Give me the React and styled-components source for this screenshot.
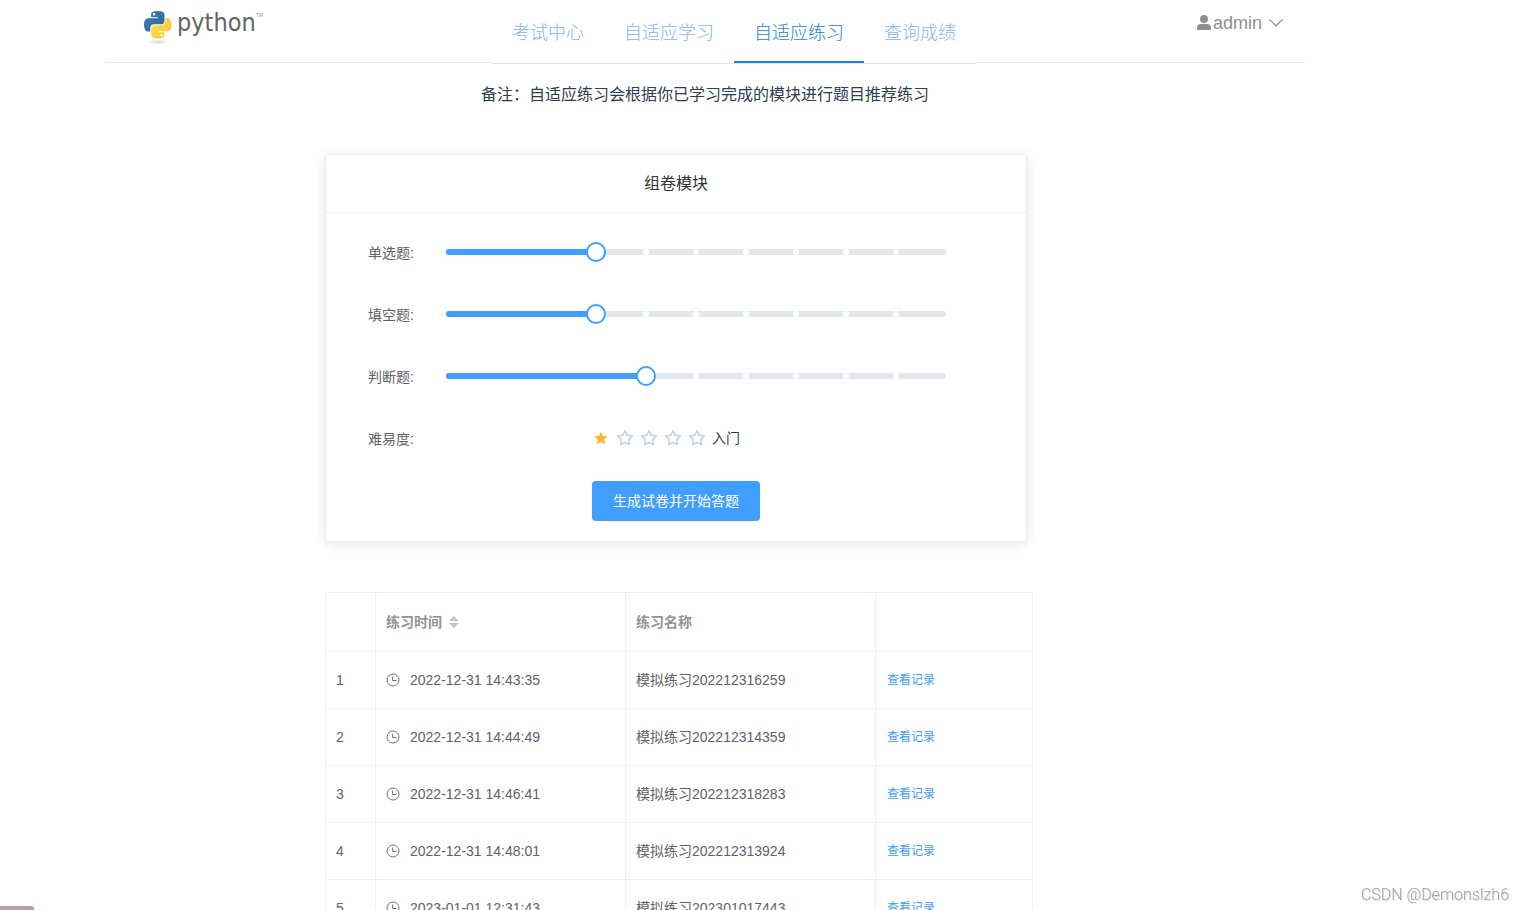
import { useState } from 'react';
import styled, { createGlobalStyle } from 'styled-components';

const blue = '#409eff';
const line = '#ebeef5';

const GlobalStyle = createGlobalStyle`
  * {
    box-sizing: border-box;
  }
  body {
    margin: 0;
    background: #fff;
    color: #2c3e50;
    font-family: "Liberation Sans", "Noto Sans CJK SC", sans-serif;
    font-size: 14px;
    line-height: 22px;
  }
  button, input {
    font: inherit;
  }
`;

const Page = styled.div`
  height: 100vh;
  overflow-y: auto;
  scrollbar-width: none;
`;

const Container = styled.div`
  max-width: 1200px;
  margin-left: 105px;
`;

const Header = styled.header`
  display: flex;
  align-items: flex-start;
  height: 63px;
  border-bottom: 1px solid #e6e6e6;
`;

const Logo = styled.a`
  display: flex;
  align-items: flex-start;
  flex: 0 0 387px;
  padding: 6px 0 0 38px;
  color: #646464;
  text-decoration: none;

  svg {
    margin-top: 4px;
  }
`;

const LogoName = styled.span`
  margin-left: 4px;
  font-family: "DejaVu Sans Condensed", "DejaVu Sans", sans-serif;
  font-size: 25px;
  line-height: 34px;
`;

const LogoMark = styled.span`
  margin-top: 6px;
  font-size: 5px;
  line-height: 6px;
  color: #999;
`;

const Nav = styled.nav`
  display: flex;
  height: 64px;
  background: #fff;
  border-bottom: 1px solid #e6e6e6;
`;

const NavItem = styled.a`
  height: 63px;
  padding: 0 20px;
  border-bottom: 2px solid ${(p) => (p.$active ? '#1682e6' : 'transparent')};
  color: ${(p) => (p.$active ? '#1682e6' : '#7fb5ec')};
  font-size: 18px;
  font-weight: 300;
  line-height: 66px;
  text-decoration: none;
`;

const UserMenu = styled.button`
  display: flex;
  align-items: center;
  margin-left: auto;
  padding: 12px 21px 0 0;
  border: 0;
  background: none;
  color: #909090;
  font-size: 18px;
  line-height: 22px;
  cursor: pointer;

  svg:first-child {
    margin-right: 2px;
  }
  svg:last-child {
    margin-left: 6px;
  }
`;

const Note = styled.p`
  margin: 0;
  padding-top: 20px;
  font-size: 16px;
  line-height: 24px;
  text-align: center;
`;

const Main = styled.main`
  max-width: 708px;
  margin: 47px 0 0 220px;
`;

const Card = styled.section`
  margin: 0 6px 50px 0;
  border: 1px solid ${line};
  border-radius: 4px;
  background: #fff;
  box-shadow: 0 2px 12px rgba(0, 0, 0, 0.1);
`;

const CardTitle = styled.h2`
  margin: 0;
  padding: 18px 20px;
  border-bottom: 1px solid ${line};
  color: #303133;
  font-size: 16px;
  font-weight: 400;
  line-height: 21px;
  text-align: center;
`;

const Form = styled.form`
  padding: 20px;
`;

const FormRow = styled.div`
  display: flex;
  height: 40px;
  margin-bottom: 22px;
`;

const RowLabel = styled.label`
  flex: 0 0 100px;
  padding-right: 32px;
  color: #606266;
  line-height: 40px;
  text-align: right;
  white-space: nowrap;
`;

const SliderBox = styled.div`
  position: relative;
  flex: 0 1 500px;
  height: 6px;
  margin-top: 16px;
  border-radius: 3px;
  background: #e4e7ed;
`;

const SliderBar = styled.div`
  height: 6px;
  border-radius: 3px 0 0 3px;
  background: ${blue};
`;

const SliderStop = styled.span`
  position: absolute;
  top: 0;
  width: 6px;
  height: 6px;
  border-radius: 50%;
  background: #fff;
  transform: translateX(-50%);
`;

const SliderInput = styled.input`
  position: absolute;
  top: -7px;
  left: -10px;
  width: calc(100% + 20px);
  height: 20px;
  margin: 0;
  background: transparent;
  appearance: none;
  cursor: pointer;

  &::-webkit-slider-thumb {
    width: 20px;
    height: 20px;
    border: 2px solid ${blue};
    border-radius: 50%;
    background: #fff;
    appearance: none;
  }
`;

const Rate = styled.div`
  display: flex;
  align-items: center;
  height: 38px;
  margin-left: 146px;
`;

const RateStar = styled.label`
  position: relative;
  display: flex;
  justify-content: center;
  width: 18px;
  margin-right: 6px;
  cursor: pointer;

  input {
    position: absolute;
    inset: 0;
    margin: 0;
    opacity: 0;
  }
`;

const SubmitButton = styled.button`
  display: block;
  height: 40px;
  margin: 0 auto;
  padding: 0 21px;
  border: 0;
  border-radius: 4px;
  background: ${blue};
  color: #fff;
  cursor: pointer;
`;

const Table = styled.table`
  width: 100%;
  table-layout: fixed;
  border-spacing: 0;
  border-top: 1px solid ${line};
  border-left: 1px solid ${line};
  color: #606266;
`;

const Th = styled.th`
  width: ${(p) => p.$width || 'auto'};
  height: 59px;
  padding: 0 10px;
  border-right: 1px solid ${line};
  border-bottom: 1px solid ${line};
  color: #909399;
  text-align: left;
`;

const Td = styled.td`
  height: 57px;
  padding: 0 10px;
  border-right: 1px solid ${line};
  border-bottom: 1px solid ${line};
`;

const SortButton = styled.button`
  display: flex;
  align-items: center;
  gap: 7px;
  padding: 0;
  border: 0;
  background: none;
  color: inherit;
  cursor: pointer;
`;

const Time = styled.span`
  display: flex;
  align-items: center;
  gap: 10px;
`;

const RecordLink = styled.a`
  display: block;
  padding-left: 1px;
  color: ${blue};
  font-size: 12px;
  line-height: 20px;
  text-decoration: none;
`;

const Watermark = styled.div`
  position: fixed;
  right: 14px;
  bottom: 6px;
  color: #a0a0a0;
  font-family: Roboto, "Liberation Sans", sans-serif;
  font-size: 16px;
  font-weight: 300;
  line-height: 18px;
  text-shadow: 1px 1px 1px #ddd;
`;

const CornerTab = styled.div`
  position: fixed;
  bottom: 0;
  left: 0;
  width: 34px;
  height: 4px;
  border-radius: 0 3px 0 0;
  background: #b4a49b;
`;

const PythonIcon = () => (
  <svg width="30" height="35" viewBox="0 0 30 35" aria-hidden="true">
    <defs>
      <linearGradient id="pyBlue" x1="0" y1="0" x2="1" y2="1">
        <stop offset="0" stopColor="#3d7fb8" />
        <stop offset="1" stopColor="#2f6797" />
      </linearGradient>
      <linearGradient id="pyYellow" x1="0" y1="0" x2="1" y2="1">
        <stop offset="0" stopColor="#ffdf5c" />
        <stop offset="1" stopColor="#fcc62d" />
      </linearGradient>
      <radialGradient id="pyShadow">
        <stop offset="0" stopColor="#d2d2d2" />
        <stop offset="1" stopColor="#fff" />
      </radialGradient>
    </defs>
    <ellipse cx="15" cy="32" rx="11" ry="2.500" fill="url(#pyShadow)" />
    <g transform="translate(1 1) scale(0.108)">
      <path fill="url(#pyBlue)" d="M126.916.072c-64.832 0-60.784 28.115-60.784 28.115l.072 29.128h61.868v8.745H41.631S.145 61.355.145 126.77c0 65.417 36.21 63.097 36.21 63.097h21.61v-30.356s-1.165-36.21 35.632-36.21h61.362s34.475.557 34.475-33.319V33.97S194.67.072 126.916.072zM92.802 19.66a11.12 11.12 0 0 1 11.13 11.13 11.12 11.12 0 0 1-11.13 11.13 11.12 11.12 0 0 1-11.13-11.13 11.12 11.12 0 0 1 11.13-11.13z" />
      <path fill="url(#pyYellow)" d="M128.757 254.126c64.832 0 60.784-28.115 60.784-28.115l-.072-29.127H127.6v-8.745h86.441s41.486 4.705 41.486-60.712c0-65.416-36.21-63.096-36.21-63.096h-21.61v30.355s1.165 36.21-35.632 36.21h-61.362s-34.475-.557-34.475 33.32v56.013s-5.235 33.897 62.518 33.897zm34.114-19.586a11.12 11.12 0 0 1-11.13-11.13 11.12 11.12 0 0 1 11.13-11.131 11.12 11.12 0 0 1 11.13 11.13 11.12 11.12 0 0 1-11.13 11.13z" />
    </g>
  </svg>
);

const UserIcon = () => (
  <svg width="14" height="16" viewBox="0 0 14 16" fill="currentColor" aria-hidden="true">
    <circle cx="7" cy="4" r="4" />
    <path d="M0 15v-2a4 4 0 0 1 4-4h6a4 4 0 0 1 4 4v2z" />
  </svg>
);

const ArrowDown = () => (
  <svg width="16" height="16" viewBox="0 0 16 16" fill="none" stroke="currentColor" strokeWidth="1.2" aria-hidden="true">
    <path d="M1.5 4.500l6.500 6.300 6.500-6.300" />
  </svg>
);

const ClockIcon = () => (
  <svg width="14" height="14" viewBox="0 0 14 14" fill="none" stroke="currentColor" strokeWidth="0.9" aria-hidden="true">
    <circle cx="7" cy="7" r="6" />
    <path d="M6.600 3.500v4h3.900" />
  </svg>
);

const StarIcon = ({ filled }) => (
  <svg width="18" height="18" viewBox="0 0 18 18" aria-hidden="true">
    {filled ? (
      <path fill="#f7ba2a" d="M9 2.700l2 4.100 4.500.65-3.250 3.200.77 4.500L9 13.000l-4.020 2.150.77-4.500L2.500 7.450l4.500-.65z" />
    ) : (
      <path
        fill="none"
        stroke="#c6d1de"
        strokeWidth="1.500"
        strokeLinejoin="round"
        d="M9 1.700l2.200 4.600 5.200.75-3.750 3.600.9 5.150L9 13.400l-4.550 2.400.9-5.150L1.600 7.050l5.200-.75z"
      />
    )}
  </svg>
);

const SortIcon = () => (
  <svg width="10" height="14" viewBox="0 0 10 14" fill="#c0c4cc" aria-hidden="true">
    <path d="M5 1l5 5H0zM0 8h10l-5 5z" />
  </svg>
);

const navItems = ['考试中心', '自适应学习', '自适应练习', '查询成绩'];
const levels = ['入门', '简单', '普通', '较难', '困难'];

const records = [
  { time: '2022-12-31 14:43:35', name: '模拟练习202212316259' },
  { time: '2022-12-31 14:44:49', name: '模拟练习202212314359' },
  { time: '2022-12-31 14:46:41', name: '模拟练习202212318283' },
  { time: '2022-12-31 14:48:01', name: '模拟练习202212313924' },
  { time: '2023-01-01 12:31:43', name: '模拟练习202301017443' },
];

function Slider({ id, value, onChange }) {
  const stops = [];
  for (let i = value + 1; i < 10; i++) {
    stops.push(<SliderStop key={i} style={{ left: `${i * 10}%` }} />);
  }
  return (
    <SliderBox>
      <SliderBar style={{ width: `${value * 10}%` }} />
      {stops}
      <SliderInput
        id={id}
        type="range"
        min="0"
        max="10"
        value={value}
        onChange={(e) => onChange(Number(e.target.value))}
      />
    </SliderBox>
  );
}

export default function App() {
  const [active, setActive] = useState('自适应练习');
  const [single, setSingle] = useState(3);
  const [blank, setBlank] = useState(3);
  const [judge, setJudge] = useState(4);
  const [level, setLevel] = useState(1);
  const [asc, setAsc] = useState(true);

  const rows = asc ? records : [...records].reverse();

  return (
    <Page>
      <GlobalStyle />
      <Container>
        <Header>
          <Logo href="#">
            <PythonIcon />
            <LogoName>python</LogoName>
            <LogoMark>TM</LogoMark>
          </Logo>
          <Nav>
            {navItems.map((item) => (
              <NavItem key={item} href="#" $active={item === active} onClick={() => setActive(item)}>
                {item}
              </NavItem>
            ))}
          </Nav>
          <UserMenu type="button">
            <UserIcon />
            admin
            <ArrowDown />
          </UserMenu>
        </Header>
        <Note>备注：自适应练习会根据你已学习完成的模块进行题目推荐练习</Note>
        <Main>
          <Card>
            <CardTitle>组卷模块</CardTitle>
            <Form onSubmit={(e) => e.preventDefault()}>
              <FormRow>
                <RowLabel htmlFor="single">单选题:</RowLabel>
                <Slider id="single" value={single} onChange={setSingle} />
              </FormRow>
              <FormRow>
                <RowLabel htmlFor="blank">填空题:</RowLabel>
                <Slider id="blank" value={blank} onChange={setBlank} />
              </FormRow>
              <FormRow>
                <RowLabel htmlFor="judge">判断题:</RowLabel>
                <Slider id="judge" value={judge} onChange={setJudge} />
              </FormRow>
              <FormRow>
                <RowLabel as="span" id="level">难易度:</RowLabel>
                <Rate role="radiogroup" aria-labelledby="level">
                  {levels.map((name, i) => (
                    <RateStar key={name}>
                      <input
                        type="radio"
                        name="level"
                        aria-label={name}
                        checked={level === i + 1}
                        onChange={() => setLevel(i + 1)}
                      />
                      <StarIcon filled={i < level} />
                    </RateStar>
                  ))}
                  <span>{levels[level - 1]}</span>
                </Rate>
              </FormRow>
              <SubmitButton type="submit">生成试卷并开始答题</SubmitButton>
            </Form>
          </Card>
          <Table>
            <thead>
              <tr>
                <Th $width="50px" />
                <Th $width="250px">
                  <SortButton type="button" onClick={() => setAsc(!asc)}>
                    练习时间
                    <SortIcon />
                  </SortButton>
                </Th>
                <Th $width="250px">练习名称</Th>
                <Th />
              </tr>
            </thead>
            <tbody>
              {rows.map((row, i) => (
                <tr key={row.name}>
                  <Td>{i + 1}</Td>
                  <Td>
                    <Time>
                      <ClockIcon />
                      {row.time}
                    </Time>
                  </Td>
                  <Td>{row.name}</Td>
                  <Td>
                    <RecordLink href="#">查看记录</RecordLink>
                  </Td>
                </tr>
              ))}
            </tbody>
          </Table>
        </Main>
      </Container>
      <CornerTab />
      <Watermark>CSDN @Demonslzh6</Watermark>
    </Page>
  );
}
